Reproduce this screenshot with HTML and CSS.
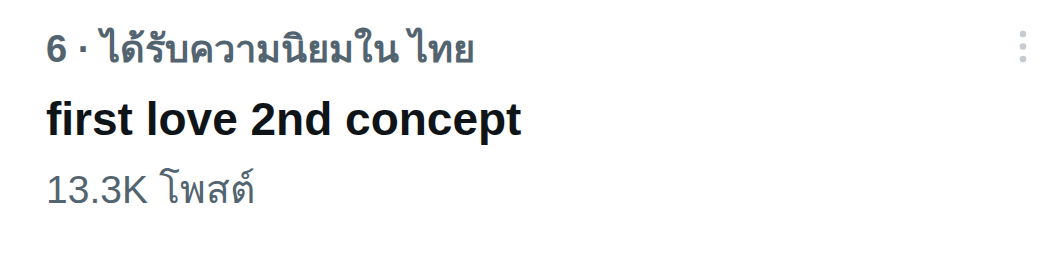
FILE: index.html
```html
<!DOCTYPE html>
<html lang="th">
<head>
  <meta charset="UTF-8">
  <meta name="viewport" content="width=device-width, initial-scale=1.0">
  <title>กำลังเป็นกระแส</title>
  <link rel="stylesheet" href="styles.css">
</head>
<body>
  <!-- รายการเทรนด์ -->
  <div class="trend">
    <div class="trend-body">
      <div class="trend-meta">6 · ได้รับความนิยมใน ไทย</div>
      <div class="trend-title">first love 2nd concept</div>
      <div class="trend-count">13.3K โพสต์</div>
    </div>
    <div class="trend-more">
      <svg width="14" height="36" viewBox="0 0 14 36">
        <circle cx="7" cy="5" r="3.3"></circle>
        <circle cx="7" cy="17.5" r="3.3"></circle>
        <circle cx="7" cy="30" r="3.3"></circle>
      </svg>
    </div>
  </div>
</body>
</html>
```

FILE: styles.css
```css
body {
  margin: 0;
  background-color: #fff;
  font-family: "Liberation Sans", "Noto Sans", Arial, sans-serif;
}

.trend {
  display: flex;
  justify-content: space-between;
  padding: 22px 20px 0 46px;
}

.trend-meta {
  font-size: 38px;
  font-weight: bold;
  color: #536471;
  line-height: 54px;
}

.trend-title {
  margin-top: 15px;
  font-size: 46px;
  font-weight: bold;
  color: #0f1419;
  line-height: 56px;
}

.trend-count {
  margin-top: 18px;
  font-size: 39px;
  color: #536471;
  line-height: 50px;
}

.trend-more {
  padding-top: 7px;
}

.trend-more svg {
  fill: #c5cbd0;
}
```
